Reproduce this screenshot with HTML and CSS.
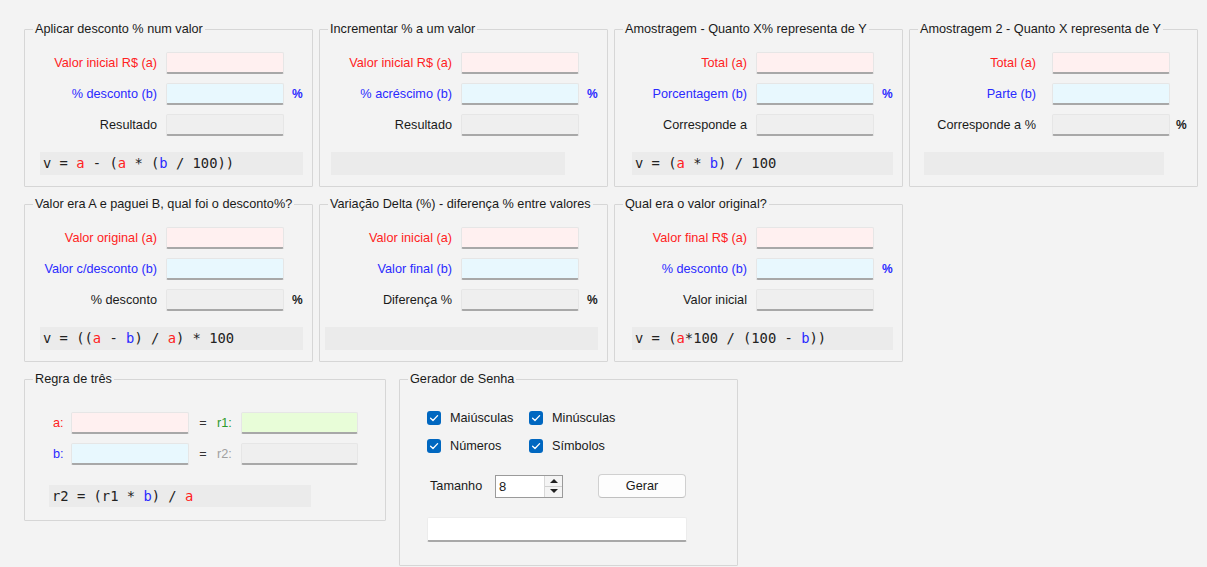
FILE: index.html
```html
<!DOCTYPE html>
<html lang="pt-BR">
<head>
<meta charset="utf-8">
<title>Calculadora de Porcentagem</title>
<link rel="stylesheet" href="styles.css">
</head>
<body>
<div class="page">
  <div class="row">
    <fieldset class="group">
      <legend>Aplicar desconto % num valor</legend>
      <div class="fields">
        <label class="lbl red">Valor inicial R$ (a)</label><div class="inp pink"></div><span></span>
        <label class="lbl blue">% desconto (b)</label><div class="inp cyan"></div><span class="unit blue">%</span>
        <label class="lbl">Resultado</label><div class="inp gray"></div><span></span>
      </div>
      <div class="formula f-16-263">v = <i class="ra">a</i> - (<i class="ra">a</i> * (<i class="bb">b</i> / 100))</div>
    </fieldset>
    <fieldset class="group">
      <legend>Incrementar % a um valor</legend>
      <div class="fields">
        <label class="lbl red">Valor inicial R$ (a)</label><div class="inp pink"></div><span></span>
        <label class="lbl blue">% acréscimo (b)</label><div class="inp cyan"></div><span class="unit blue">%</span>
        <label class="lbl">Resultado</label><div class="inp gray"></div><span></span>
      </div>
      <div class="formula f-12-234"></div>
    </fieldset>
    <fieldset class="group">
      <legend>Amostragem - Quanto X% representa de Y</legend>
      <div class="fields">
        <label class="lbl red">Total (a)</label><div class="inp pink"></div><span></span>
        <label class="lbl blue">Porcentagem (b)</label><div class="inp cyan"></div><span class="unit blue">%</span>
        <label class="lbl">Corresponde a</label><div class="inp gray"></div><span></span>
      </div>
      <div class="formula f-18-261">v = (<i class="ra">a</i> * <i class="bb">b</i>) / 100</div>
    </fieldset>
    <fieldset class="group">
      <legend>Amostragem 2 - Quanto X representa de Y</legend>
      <div class="fields narrow">
        <label class="lbl red">Total (a)</label><div class="inp pink"></div><span></span>
        <label class="lbl blue">Parte (b)</label><div class="inp cyan"></div><span></span>
        <label class="lbl">Corresponde a %</label><div class="inp gray"></div><span class="unit">%</span>
      </div>
      <div class="formula f-15-240"></div>
    </fieldset>
  </div>

  <div class="row">
    <fieldset class="group">
      <legend>Valor era A e paguei B, qual foi o desconto%?</legend>
      <div class="fields">
        <label class="lbl red">Valor original (a)</label><div class="inp pink"></div><span></span>
        <label class="lbl blue">Valor c/desconto (b)</label><div class="inp cyan"></div><span></span>
        <label class="lbl">% desconto</label><div class="inp gray"></div><span class="unit">%</span>
      </div>
      <div class="formula f-16-263">v = ((<i class="ra">a</i> - <i class="bb">b</i>) / <i class="ra">a</i>) * 100</div>
    </fieldset>
    <fieldset class="group">
      <legend>Variação Delta (%) - diferença % entre valores</legend>
      <div class="fields">
        <label class="lbl red">Valor inicial (a)</label><div class="inp pink"></div><span></span>
        <label class="lbl blue">Valor final (b)</label><div class="inp cyan"></div><span></span>
        <label class="lbl">Diferença %</label><div class="inp gray"></div><span class="unit">%</span>
      </div>
      <div class="formula f-6-273"></div>
    </fieldset>
    <fieldset class="group">
      <legend>Qual era o valor original?</legend>
      <div class="fields">
        <label class="lbl red">Valor final R$ (a)</label><div class="inp pink"></div><span></span>
        <label class="lbl blue">% desconto (b)</label><div class="inp cyan"></div><span class="unit blue">%</span>
        <label class="lbl">Valor inicial</label><div class="inp gray"></div><span></span>
      </div>
      <div class="formula f-18-261">v = (<i class="ra">a</i>*100 / (100 - <i class="bb">b</i>))</div>
    </fieldset>
  </div>

  <div class="row row3">
    <fieldset class="group regra">
      <legend>Regra de três</legend>
      <div class="rt-grid">
        <span class="red">a:</span><div class="inp pink"></div><span class="eq">=</span><span class="green">r1:</span><div class="inp lime"></div>
        <span class="blue">b:</span><div class="inp cyan"></div><span class="eq">=</span><span class="muted">r2:</span><div class="inp gray"></div>
      </div>
      <div class="formula f-rt">r2 = (r1 * <i class="bb">b</i>) / <i class="ra">a</i></div>
    </fieldset>
    <fieldset class="group gerador">
      <legend>Gerador de Senha</legend>
      <div class="checks">
        <label class="chk"><span class="box"><svg viewBox="0 0 14 14" width="14" height="14"><path d="M3.6 7.2 L6 9.5 L10.6 4.6" fill="none" stroke="#ffffff" stroke-width="1.3" stroke-linecap="round" stroke-linejoin="round"/></svg></span>Maiúsculas</label>
        <label class="chk"><span class="box"><svg viewBox="0 0 14 14" width="14" height="14"><path d="M3.6 7.2 L6 9.5 L10.6 4.6" fill="none" stroke="#ffffff" stroke-width="1.3" stroke-linecap="round" stroke-linejoin="round"/></svg></span>Minúsculas</label>
        <label class="chk"><span class="box"><svg viewBox="0 0 14 14" width="14" height="14"><path d="M3.6 7.2 L6 9.5 L10.6 4.6" fill="none" stroke="#ffffff" stroke-width="1.3" stroke-linecap="round" stroke-linejoin="round"/></svg></span>Números</label>
        <label class="chk"><span class="box"><svg viewBox="0 0 14 14" width="14" height="14"><path d="M3.6 7.2 L6 9.5 L10.6 4.6" fill="none" stroke="#ffffff" stroke-width="1.3" stroke-linecap="round" stroke-linejoin="round"/></svg></span>Símbolos</label>
      </div>
      <div class="size-row">
        <span class="size-lbl">Tamanho</span>
        <div class="spin">
          <span class="spin-val">8</span>
          <span class="spin-btns">
            <span class="spin-btn"><svg viewBox="0 0 8 5" width="8" height="5"><path d="M0 5 L4 1 L8 5 Z" fill="#202020"/></svg></span>
            <span class="spin-btn"><svg viewBox="0 0 8 5" width="8" height="5"><path d="M0 0 L8 0 L4 4 Z" fill="#202020"/></svg></span>
          </span>
        </div>
        <button class="btn" type="button">Gerar</button>
      </div>
      <div class="out"></div>
    </fieldset>
  </div>
</div>
</body>
</html>
```

FILE: styles.css
```css
html, body {
  margin: 0;
  padding: 0;
  background: #f3f3f3;
}
body {
  font-family: "Liberation Sans", Arial, sans-serif;
  font-size: 12.7px;
  color: #1a1a1a;
  width: 1207px;
  height: 567px;
  overflow: hidden;
}
.page {
  padding: 22px 0 0 24px;
  display: flex;
  flex-direction: column;
  gap: 10px;
}
.row {
  display: flex;
  gap: 6px;
  align-items: flex-start;
}
.row3 {
  gap: 13px;
}
.group {
  margin: 0;
  padding: 0;
  min-width: 0;
  width: 289px;
  box-sizing: border-box;
  border: 1px solid #d6d6d6;
  border-radius: 1px;
}
.group legend {
  padding: 0 2px;
  margin-left: 8px;
  line-height: 14px;
  height: 14px;
  white-space: nowrap;
  color: #1a1a1a;
}
.fields {
  display: grid;
  grid-template-columns: 132px 118px auto;
  column-gap: 9px;
  row-gap: 9px;
  padding-top: 16px;
  align-items: center;
}
.fields.narrow {
  grid-template-columns: 126px 118px auto;
  column-gap: 16px;
}
.fields.narrow .unit {
  margin-left: -10px;
}
.lbl {
  text-align: right;
  white-space: nowrap;
  line-height: 22px;
}
.inp {
  height: 22px;
  box-sizing: border-box;
  border: 1px solid #e6e6e6;
  border-bottom: 2px solid #a8a8a8;
  border-radius: 2px;
}
.pink { background: #fff0f0; }
.cyan { background: #e8f8fe; }
.gray { background: #efefef; }
.lime { background: #e8fdd8; }
.red { color: #ff2222; }
.blue { color: #2a2aff; }
.green { color: #2c9a2c; }
.muted { color: #a0a0a0; }
.unit {
  font-weight: bold;
  font-size: 12px;
  margin-left: -1px;
}
.formula {
  margin-top: 16px;
  margin-bottom: 11px;
  height: 23px;
  line-height: 23px;
  background: #ebebeb;
  font-family: "DejaVu Sans Mono", "Liberation Mono", monospace;
  font-size: 13.8px;
  color: #222;
  padding-left: 3px;
  box-sizing: border-box;
  white-space: pre;
}
.formula i { font-style: normal; }
.formula .ra { color: #ff2222; }
.formula .bb { color: #2a2aff; }
.f-16-263 { margin-left: 15px; width: 263px; }
.f-12-234 { margin-left: 11px; width: 234px; }
.f-18-261 { margin-left: 17px; width: 261px; }
.f-15-240 { margin-left: 14px; width: 240px; }
.f-6-273 { margin-left: 5px; width: 273px; }

/* Regra de três */
.regra {
  width: 362px;
}
.rt-grid {
  display: grid;
  grid-template-columns: 18px 118px 28px 24px 117px;
  row-gap: 9px;
  padding: 26px 0 0 28px;
  align-items: center;
}
.rt-grid .eq {
  text-align: center;
  color: #333;
}
.f-rt {
  margin-top: 20px;
  margin-left: 24px;
  margin-bottom: 13px;
  width: 262px;
  height: 22px;
  line-height: 22px;
}

/* Gerador de Senha */
.gerador {
  width: 339px;
  height: 194px;
}
.checks {
  display: grid;
  grid-template-columns: 102px auto;
  row-gap: 10px;
  padding: 23px 0 0 27px;
}
.chk {
  display: flex;
  align-items: center;
  gap: 9px;
  height: 18px;
  white-space: nowrap;
}
.box {
  width: 14px;
  height: 14px;
  background: #0067c0;
  border-radius: 3px;
  display: flex;
}
.size-row {
  display: flex;
  align-items: center;
  margin-top: 19px;
  padding-left: 30px;
  height: 24px;
}
.size-lbl {
  width: 65px;
}
.spin {
  width: 68px;
  height: 23px;
  box-sizing: border-box;
  border: 1px solid #9a9a9a;
  background: #fff;
  display: flex;
}
.spin-val {
  flex: 1;
  line-height: 21px;
  padding-left: 3px;
  font-size: 13px;
}
.spin-btns {
  width: 17px;
  display: flex;
  flex-direction: column;
  border-left: 1px solid #d8d8d8;
  background: #f4f4f4;
}
.spin-btn {
  flex: 1;
  display: flex;
  align-items: center;
  justify-content: center;
}
.spin-btn + .spin-btn {
  border-top: 1px solid #d0d0d0;
}
.btn {
  margin-left: 35px;
  width: 88px;
  height: 24px;
  background: #fdfdfd;
  border: 1px solid #d0d0d0;
  border-bottom-color: #c0c0c0;
  border-radius: 4px;
  font-family: "Liberation Sans", Arial, sans-serif;
  font-size: 12.7px;
  color: #1a1a1a;
  padding: 0;
}
.out {
  margin: 19px 0 0 27px;
  width: 260px;
  height: 25px;
  box-sizing: border-box;
  background: #fff;
  border: 1px solid #ececec;
  border-bottom: 2px solid #a8a8a8;
  border-radius: 2px;
}
```
